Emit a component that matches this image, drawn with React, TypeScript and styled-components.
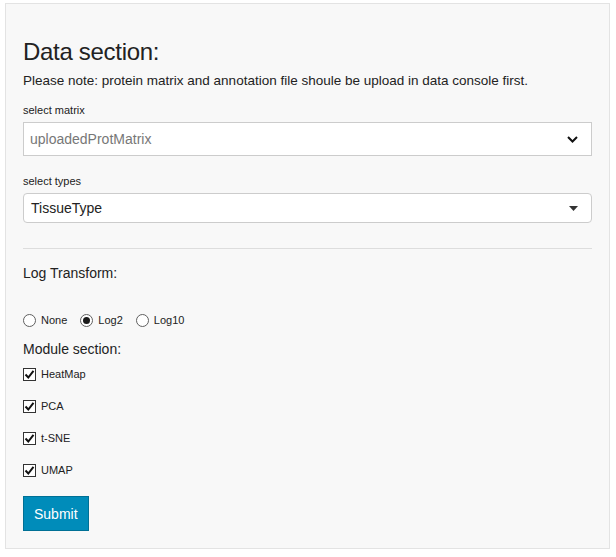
import React from 'react';
import styled, { createGlobalStyle } from 'styled-components';

const GlobalStyle = createGlobalStyle`
  html, body {
    margin: 0;
    background: #ffffff;
    font-family: 'Liberation Sans', Arial, sans-serif;
    color: #222222;
  }
`;

const Panel = styled.form`
  box-sizing: border-box;
  width: 605px;
  height: 546px;
  margin: 3px 0 0 5px;
  padding: 33px 17px 0;
  background: #f8f8f8;
  border: 1px solid #e3e3e3;
  display: flex;
  flex-direction: column;
`;

const Title = styled.h3`
  margin: 0;
  font-size: 24px;
  letter-spacing: -0.3px;
  font-weight: 400;
  line-height: 30px;
  color: #222222;
`;

const Note = styled.p`
  margin: 4px 0 0;
  font-size: 13.5px;
  line-height: 20px;
`;

const FieldLabel = styled.label<{ $gap: number }>`
  display: block;
  margin-top: ${(p) => p.$gap}px;
  font-size: 11px;
  line-height: 16px;
  color: #222222;
`;

const SelectBox = styled.div<{ $height: number; $rounded?: boolean; $muted?: boolean }>`
  box-sizing: border-box;
  margin-top: 4px;
  height: ${(p) => p.$height}px;
  display: flex;
  align-items: center;
  justify-content: space-between;
  padding: 0 13px 0 ${(p) => (p.$rounded ? 7 : 6)}px;
  background: #ffffff;
  border: 1px solid #cccccc;
  border-radius: ${(p) => (p.$rounded ? '4px' : '0')};
  font-size: 14px;
  color: ${(p) => (p.$muted ? '#777777' : '#222222')};
`;

const Divider = styled.hr`
  margin: 25px 0 0;
  border: 0;
  border-top: 1px solid #dddddd;
  height: 0;
`;

const SectionLabel = styled.div<{ $gap: number }>`
  margin-top: ${(p) => p.$gap}px;
  font-size: 14px;
  line-height: 20px;
`;

const RadioRow = styled.div`
  margin-top: 29px;
  display: flex;
  align-items: center;
  gap: 13px;
  height: 16px;
`;

const Option = styled.label`
  display: flex;
  align-items: center;
  gap: 5px;
  font-size: 11px;
  line-height: 16px;
  color: #222222;
`;

const RadioDot = styled.span<{ $on?: boolean }>`
  box-sizing: border-box;
  width: 13px;
  height: 13px;
  border-radius: 50%;
  border: 1px solid #5f5f5f;
  background: #ffffff;
  display: flex;
  align-items: center;
  justify-content: center;
  &::after {
    content: '';
    width: 7px;
    height: 7px;
    border-radius: 50%;
    background: ${(p) => (p.$on ? '#1a1a1a' : 'transparent')};
  }
`;

const CheckList = styled.div`
  margin-top: 7px;
  display: flex;
  flex-direction: column;
  gap: 16px;
`;

const CheckBox = styled.span`
  box-sizing: border-box;
  width: 13px;
  height: 13px;
  border: 1px solid #333333;
  background: #ffffff;
  display: flex;
  align-items: center;
  justify-content: center;
`;

const SubmitButton = styled.button`
  align-self: flex-start;
  margin-top: 18px;
  height: 35px;
  padding: 0 10px;
  background: #008cba;
  border: 1px solid #007095;
  color: #ffffff;
  font-family: 'Liberation Sans', Arial, sans-serif;
  font-size: 14px;
`;

const Chevron = () => (
  <svg width="11" height="7" viewBox="0 0 11 7">
    <path d="M1 1 L5.5 5.5 L10 1" fill="none" stroke="#111" strokeWidth="2" />
  </svg>
);

const Caret = () => (
  <svg width="9" height="5" viewBox="0 0 9 5">
    <path d="M0 0 H9 L4.5 5 Z" fill="#333" />
  </svg>
);

const Tick = () => (
  <svg width="11" height="11" viewBox="0 0 11 11">
    <path d="M1.5 5.5 L4.3 8.5 L9.5 1.8" fill="none" stroke="#111" strokeWidth="2" />
  </svg>
);

const modules = ['HeatMap', 'PCA', 't-SNE', 'UMAP'];
const transforms = ['None', 'Log2', 'Log10'];

export default function App() {
  return (
    <>
      <GlobalStyle />
      <Panel onSubmit={(e) => e.preventDefault()}>
        <Title>Data section:</Title>
        <Note>Please note: protein matrix and annotation file shoule be upload in data console first.</Note>

        <FieldLabel $gap={11}>select matrix</FieldLabel>
        <SelectBox $height={34} $muted>
          <span>uploadedProtMatrix</span>
          <Chevron />
        </SelectBox>

        <FieldLabel $gap={17}>select types</FieldLabel>
        <SelectBox $height={30} $rounded>
          <span>TissueType</span>
          <Caret />
        </SelectBox>

        <Divider />

        <SectionLabel $gap={14}>Log Transform:</SectionLabel>
        <RadioRow>
          {transforms.map((t) => (
            <Option key={t}>
              <RadioDot $on={t === 'Log2'} />
              {t}
            </Option>
          ))}
        </RadioRow>

        <SectionLabel $gap={11}>Module section:</SectionLabel>
        <CheckList>
          {modules.map((m) => (
            <Option key={m}>
              <CheckBox>
                <Tick />
              </CheckBox>
              {m}
            </Option>
          ))}
        </CheckList>

        <SubmitButton type="submit">Submit</SubmitButton>
      </Panel>
    </>
  );
}
